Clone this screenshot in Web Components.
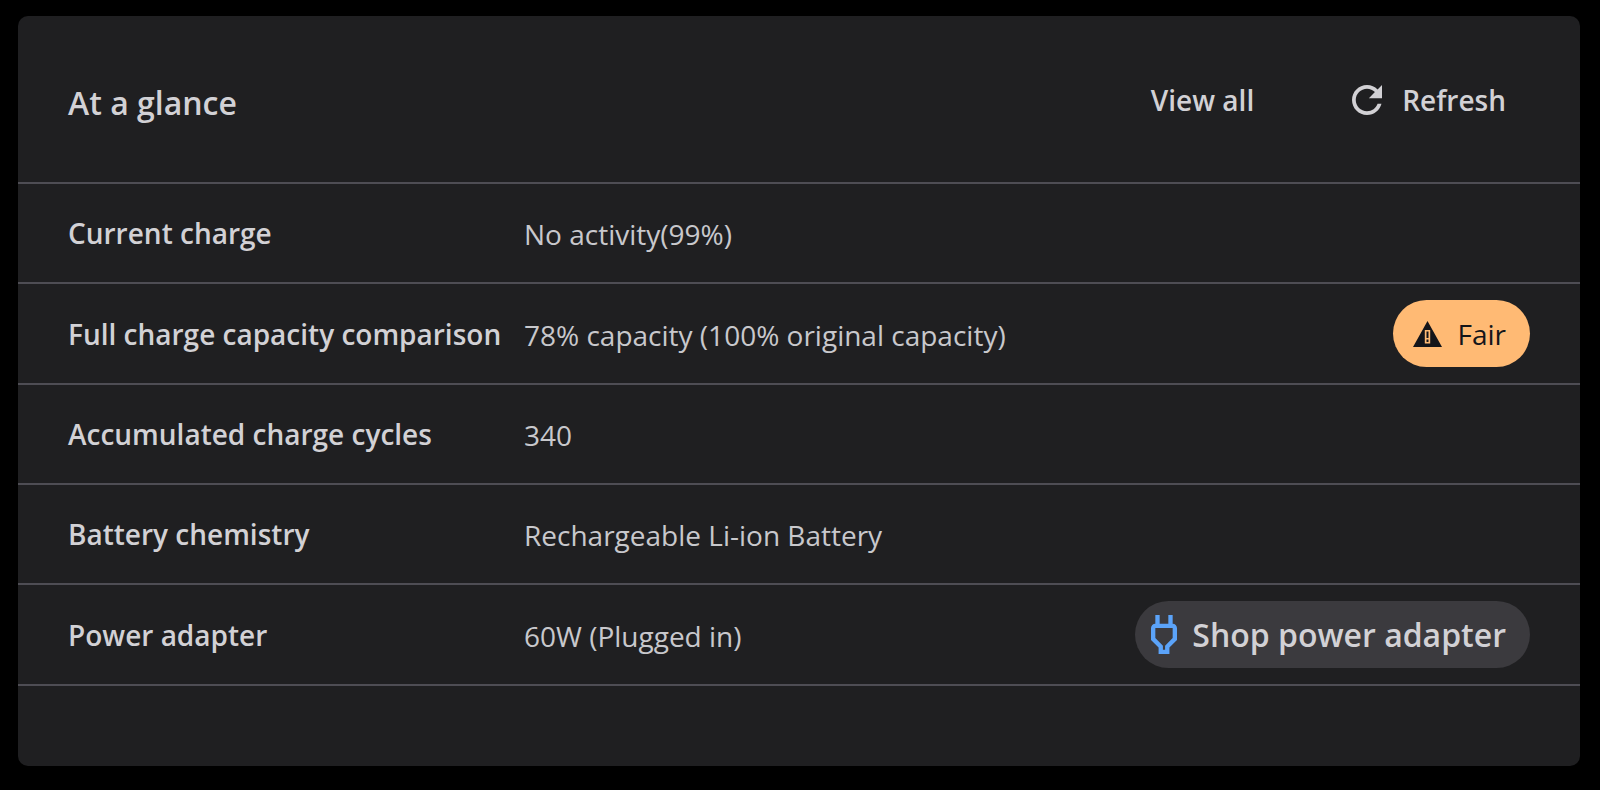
<!DOCTYPE html>
<html lang="en">
<head>
<meta charset="utf-8">
<meta name="viewport" content="width=device-width, initial-scale=1">
<title>Battery – At a glance</title>
<style>
  body {
    margin: 0;
    padding: 16px 20px 24px 18px;
    background: #000;
    color: #d2d1d5;
    font-family: "Segoe UI", "Open Sans", "Noto Sans", sans-serif;
    font-size: 28px;
    line-height: 40px;
  }
</style>
</head>
<body>
<glance-card>
  <span slot="title">At a glance</span>
  <text-action slot="actions">View all</text-action>
  <text-action slot="actions" icon="refresh">Refresh</text-action>
  <glance-table></glance-table>
</glance-card>

<script>
  /* Icon set shared by buttons and pills */
  const ICONS = {
    refresh: `<svg width="30" height="30" viewBox="4 4 16 16" aria-hidden="true"><path fill="currentColor" d="M17.65 6.35C16.2 4.9 14.21 4 12 4c-4.42 0-7.99 3.58-7.99 8s3.57 8 7.99 8c3.73 0 6.84-2.55 7.73-6h-2.08c-.82 2.33-3.04 4-5.65 4-3.31 0-6-2.69-6-6s2.69-6 6-6c1.66 0 3.14.69 4.22 1.78L13 11h7V4l-2.35 2.35z"/></svg>`,
    warning: `<svg width="29" height="26" viewBox="0 0 29 26" aria-hidden="true"><path fill="currentColor" fill-rule="evenodd" d="M14.5 0L29 26H0zM11.8 9h5.4v13.5h-5.4zM13.5 10.5v6.5h2v-6.5zM13.5 18.5v2.5h2v-2.5z"/></svg>`,
    plug: `<svg width="26" height="39" viewBox="6 3 12 18" aria-hidden="true"><path fill="#5ba3f9" d="M16 9v4.66l-3.5 3.51V19h-1v-1.83L8 13.65V9h8m0-6h-2v4h-4V3H8v4h-.01C6.9 6.99 6 7.89 6 8.98v5.52L9.5 18v3h5v-3l3.5-3.51V9c0-1.1-.9-2-2-2V3z"/></svg>`
  };

  customElements.define('glance-card', class extends HTMLElement {
    constructor() {
      super();
      this.attachShadow({ mode: 'open' }).innerHTML = `
        <style>
          :host { display: block; background: #1f1f21; border-radius: 10px; padding-bottom: 80px; }
          header { display: flex; align-items: center; justify-content: space-between;
            box-sizing: border-box; min-height: 168px; padding: 2px 50px 0; border-bottom: 2px solid #4e4d54; }
          h2 { margin: 6px 0 0; font-size: 32px; font-weight: 650; line-height: 44px; }
          nav { display: flex; align-items: center; gap: 50px; }
        </style>
        <header>
          <h2><slot name="title"></slot></h2>
          <nav aria-label="Battery actions"><slot name="actions"></slot></nav>
        </header>
        <slot></slot>`;
    }
  });

  customElements.define('text-action', class extends HTMLElement {
    constructor() {
      super();
      this.attachShadow({ mode: 'open' }).innerHTML = `
        <style>
          :host { display: block; }
          button { display: flex; align-items: center; gap: 20px; margin: 0; padding: 0 24px;
            border: 0; background: none; color: inherit; font: inherit; font-weight: 600; cursor: pointer; }
          svg { display: block; }
        </style>
        <button type="button">${ICONS[this.getAttribute('icon')] || ''}<slot></slot></button>`;
    }
  });

  customElements.define('status-pill', class extends HTMLElement {
    constructor() {
      super();
      this.attachShadow({ mode: 'open' }).innerHTML = `
        <style>
          :host { display: flex; align-items: center; gap: 15px; box-sizing: border-box;
            width: fit-content; height: 67px; margin-left: auto; padding: 0 24px 0 20px;
            border-radius: 34px; background: #ffba74; color: #14151a; font-weight: 500; }
          svg { display: block; }
        </style>
        ${ICONS.warning}<slot></slot>`;
    }
  });

  customElements.define('shop-button', class extends HTMLElement {
    constructor() {
      super();
      this.attachShadow({ mode: 'open' }).innerHTML = `
        <style>
          :host { display: block; width: fit-content; margin-left: auto; }
          button { display: flex; align-items: center; gap: 15px; box-sizing: border-box; height: 67px;
            margin: 0; padding: 0 24px 0 16px; border: 0; border-radius: 34px; background: #3b3a3e;
            color: inherit; font: inherit; font-size: 32px; font-weight: 600; white-space: nowrap; cursor: pointer; }
          svg { display: block; }
        </style>
        <button type="button">${ICONS.plug}<slot></slot></button>`;
    }
  });

  customElements.define('glance-table', class extends HTMLElement {
    constructor() {
      super();
      const rows = [
        ['Current charge', 'No activity(99%)', ''],
        ['Full charge capacity comparison', '78% capacity (100% original capacity)', '<status-pill>Fair</status-pill>'],
        ['Accumulated charge cycles', '340', ''],
        ['Battery chemistry', 'Rechargeable Li-ion Battery', ''],
        ['Power adapter', '60W (Plugged in)', '<shop-button>Shop power adapter</shop-button>']
      ];
      this.attachShadow({ mode: 'open' }).innerHTML = `
        <style>
          :host { display: block; }
          table { width: 100%; border-collapse: separate; border-spacing: 0; }
          th, td { box-sizing: border-box; height: 100px; padding: 0; border-bottom: 2px solid #4e4d54;
            text-align: left; vertical-align: middle; }
          th { width: 506px; padding-left: 50px; font-weight: 600; white-space: nowrap; }
          .value { padding-top: 2px; color: #c8c8cc; font-weight: 450; }
          .extra { padding: 16px 50px 16px 0; }
        </style>
        <table>
          <tbody>
            ${rows.map(([label, value, extra]) => `<tr><th scope="row">${label}</th><td class="value">${value}</td><td class="extra">${extra}</td></tr>`).join('')}
          </tbody>
        </table>`;
    }
  });
</script>
</body>
</html>
